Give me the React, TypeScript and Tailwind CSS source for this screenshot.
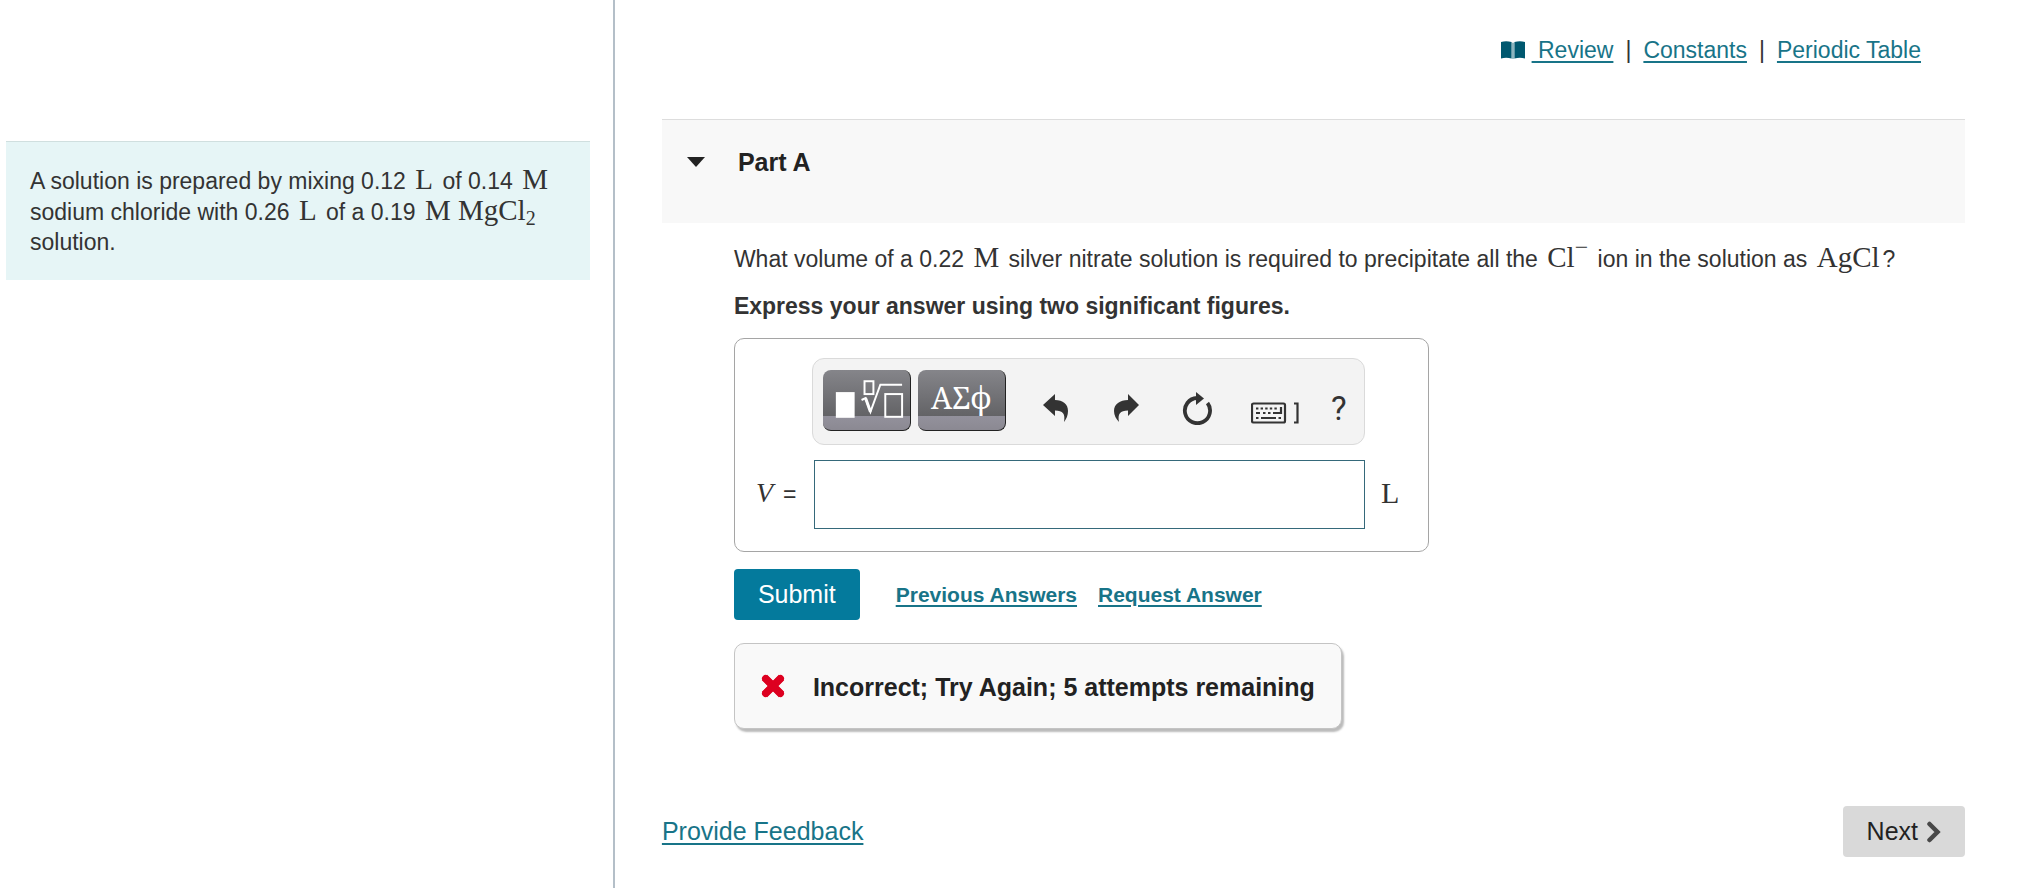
import { useState, type ReactNode } from 'react';

// Chemistry / math terms are set in a serif face inside the sans text
function Formula({ children }: { children: ReactNode }) {
  return (
    <span className="mx-[3px] font-['Liberation_Serif',serif] text-[29px] leading-none">{children}</span>
  );
}

function BookIcon() {
  return (
    <svg viewBox="0 0 24 18" className="h-[18px] w-6 text-[#00586f]" fill="currentColor" aria-hidden="true">
      <path d="M0 1Q5-.6 10.500 1V17.500Q5 16 0 17.500Z" />
      <path d="M13.500 1Q19-.6 24 1V17.500Q19 16 13.500 17.500Z" />
      <path d="M10.500 1L12 2L13.500 1V17.500L12 18L10.500 17.500Z" opacity=".45" />
    </svg>
  );
}

function TemplatesIcon() {
  return (
    <svg viewBox="0 0 88 61" className="h-[61px] w-[88px]" fill="none" stroke="#fff" aria-hidden="true">
      <rect x="13" y="22" width="19" height="26" fill="#fff" stroke="none" />
      <rect x="42" y="11" width="9" height="13" strokeWidth="2" />
      <path d="M39 30L43 28L48 42L58 14.500H80" strokeWidth="2" />
      <path d="M43 28L48 42" strokeWidth="3" />
      <rect x="63" y="24" width="17" height="23" strokeWidth="2" />
    </svg>
  );
}

function UndoIcon() {
  return (
    <svg viewBox="0 0 25 29" className="h-[29px] w-[25px]" fill="currentColor" aria-hidden="true">
      <path d="M0 11L12 0V6C20 6 25 10 25 17C25 21 23.500 25 21 28C22.500 20 20 16.500 12 16.500V22Z" />
    </svg>
  );
}

function RedoIcon() {
  return (
    <svg viewBox="0 0 25 29" className="h-[29px] w-[25px]" fill="currentColor" aria-hidden="true">
      <path d="M25 11L14 0V6C6 6 0 10 0 17C0 21 2 25 5 28C3.500 20 6 16.500 14 16.500V22Z" />
    </svg>
  );
}

function ResetIcon() {
  return (
    <svg viewBox="0 0 30 33" className="h-[33px] w-[30px]" aria-hidden="true">
      <path
        d="M15 6A12.600 12.600 0 1 0 25.500 11"
        fill="none"
        stroke="currentColor"
        strokeWidth="3.800"
      />
      <path d="M14 0L22 6.500L14 13Z" fill="currentColor" />
    </svg>
  );
}

function KeyboardIcon() {
  return (
    <svg viewBox="0 0 48 22" className="h-[22px] w-12" fill="none" stroke="currentColor" aria-hidden="true">
      <rect x="1" y="1.500" width="33" height="19" rx="1.500" strokeWidth="2.200" />
      <path d="M5 6.500H26" strokeWidth="2.200" strokeDasharray="2.400 2.200" />
      <path d="M5 11H9M12 11H14.500M17 11H19.500M22 11H30V5" strokeWidth="2.200" />
      <path d="M5 16H7.500M10 16H25M27.500 16H30" strokeWidth="2.200" />
      <path d="M43 1.500H46.500V20.500H43" strokeWidth="2.200" />
    </svg>
  );
}

function CrossIcon() {
  return (
    <svg viewBox="0 0 24 24" className="size-6 shrink-0" stroke="#dd0020" strokeWidth="7.500" aria-hidden="true">
      <path d="M3.500 3.500L20.500 20.500M20.500 3.500L3.500 20.500" strokeLinecap="butt" />
      <path d="M4.500 4.500L19.500 19.500M19.500 4.500L4.500 19.500" strokeLinecap="round" strokeWidth="7" />
    </svg>
  );
}

function ChevronIcon() {
  return (
    <svg viewBox="0 0 15 22" className="h-[22px] w-[15px]" fill="none" stroke="#484848" strokeWidth="4.500" strokeLinecap="round" aria-hidden="true">
      <path d="M3.500 3L11.500 11L3.500 19" strokeLinejoin="miter" />
    </svg>
  );
}

const linkClass = 'text-[#187488] underline decoration-2 underline-offset-3';
const paletteClass =
  'flex h-[61px] w-[88px] items-center justify-center rounded-lg border-r border-b border-[#222] bg-[linear-gradient(#85858a_0,#636366_46px,#93919c_46px,#8b8992_100%)] text-white';

function AnswerBox() {
  const [value, setValue] = useState('');

  return (
    <div className="w-[695px] rounded-[10px] border border-[#a5a5a5] pt-[19px] pr-[63px] pb-[22px] pl-[21px]">
      {/* Toolbar */}
      <div className="ml-14 flex h-[87px] items-start rounded-[12px] border border-[#dadada] bg-[#f3f3f3] pt-[11px] pl-2.5 text-[#333]">
        <button type="button" aria-label="Templates" className={paletteClass}>
          <TemplatesIcon />
        </button>
        <button
          type="button"
          aria-label="Symbols"
          className={`${paletteClass} ml-[7px] pb-1 font-['Noto_Serif','Liberation_Serif',serif] text-[30px] leading-none`}
        >
          ΑΣϕ
        </button>
        <div className="flex h-[77px] items-center">
          <button type="button" aria-label="Undo" className="ml-[37px]"><UndoIcon /></button>
          <button type="button" aria-label="Redo" className="ml-[46px]"><RedoIcon /></button>
          <button type="button" aria-label="Reset" className="ml-[43px]"><ResetIcon /></button>
          <button type="button" aria-label="Keyboard shortcuts" className="ml-[39px] pt-2"><KeyboardIcon /></button>
          <button type="button" aria-label="Help" className="ml-8 font-['Roboto',sans-serif] text-[33px] leading-none">?</button>
        </div>
      </div>

      {/* Value and unit */}
      <div className="mt-[15px] flex items-center">
        <label htmlFor="answer" className="w-[58px] shrink-0 pb-1 text-[23px] whitespace-nowrap">
          <span className="mr-2.5 font-['Liberation_Serif',serif] text-[28px] italic">V</span>=
        </label>
        <input
          id="answer"
          type="text"
          value={value}
          onChange={(e) => setValue(e.target.value)}
          className="h-[69px] min-w-0 flex-1 border border-[#35697a] bg-white px-3 text-2xl outline-none"
        />
        <span className="-mr-9 ml-4 w-5 pb-1 font-['Liberation_Serif',serif] text-[30px]">L</span>
      </div>
    </div>
  );
}

export default function App() {
  const [open, setOpen] = useState(true);

  return (
    <div className="flex min-h-screen bg-white font-['Liberation_Sans',Arial,sans-serif] text-[23px] text-[#333]">
      {/* Problem statement */}
      <aside className="w-[30%] shrink-0 pt-[141px] pr-[23px] pl-1.5">
        <p className="border-t border-[#d0dfdf] bg-[#e6f5f6] px-6 pt-[23px] pb-[23px] leading-[30px]">
          A solution is prepared by mixing 0.12 <Formula>L</Formula> of 0.14 <Formula>M</Formula>{' '}
          sodium chloride with 0.26 <Formula>L</Formula> of a 0.19{' '}
          <Formula>
            M MgCl<sub className="text-[20px]">2</sub>
          </Formula>{' '}
          solution.
        </p>
      </aside>

      <main className="min-w-0 flex-1 border-l-2 border-[#b4bfc8] pr-[78px] pl-[47px]">
        <nav className="flex h-[119px] items-start justify-end pt-9 pr-11 leading-7">
          <span className="mt-[5px] mr-[7px]"><BookIcon /></span>
          <a href="#review" className={`${linkClass} whitespace-pre`}> Review</a>
          <span className="mx-3">|</span>
          <a href="#constants" className={linkClass}>Constants</a>
          <span className="mx-3">|</span>
          <a href="#periodic-table" className={linkClass}>Periodic Table</a>
        </nav>

        <h2 className="h-[104px] border-t border-[#ddd] bg-[#f8f8f8] pt-[27px] pl-[25px] text-[25px] leading-[30px] font-bold text-[#222]">
          <button type="button" onClick={() => setOpen(!open)} aria-expanded={open} className="flex items-center gap-[33px]">
            <svg viewBox="0 0 18 10" className="h-2.5 w-[18px]" fill="#222" aria-hidden="true">
              <path d="M0 0H18L9 10Z" />
            </svg>
            Part A
          </button>
        </h2>

        {open && (
          <section className="pl-18">
            <p className="pt-5 leading-8">
              What volume of a 0.22 <Formula>M</Formula> silver nitrate solution is required to precipitate all the{' '}
              <Formula>
                Cl<sup className="text-[24px]">−</sup>
              </Formula>{' '}
              ion in the solution as <Formula>AgCl</Formula>?
            </p>
            <p className="mt-[15px] mb-4 leading-8 font-bold">
              Express your answer using two significant figures.
            </p>

            <AnswerBox />

            <div className="mt-[17px] flex items-center text-[21px] font-bold">
              <button type="button" className="h-[51px] rounded-sm bg-[#047a9c] px-6 text-[25px] font-normal text-white">
                Submit
              </button>
              <a href="#previous" className={`${linkClass} ml-9`}>Previous Answers</a>
              <a href="#request" className={`${linkClass} ml-[21px]`}>Request Answer</a>
            </div>

            <div
              role="status"
              className="mt-[23px] flex h-[86px] w-fit items-center gap-7 rounded-[10px] border border-[#c4c4c4] bg-[#f9f9f9] px-[26px] text-[25px] font-bold text-[#222] shadow-[2px_3px_2px_#bbb]"
            >
              <CrossIcon />
              <span className="pt-1">Incorrect; Try Again; 5 attempts remaining</span>
            </div>
          </section>
        )}

        <footer className="mt-[77px] flex items-center justify-between text-[25px]">
          <a href="#feedback" className={linkClass}>Provide Feedback</a>
          <button type="button" className="flex h-[51px] items-center gap-2 rounded-sm bg-[#d9d9d9] px-6 text-[#222]">
            Next
            <ChevronIcon />
          </button>
        </footer>
      </main>
    </div>
  );
}
